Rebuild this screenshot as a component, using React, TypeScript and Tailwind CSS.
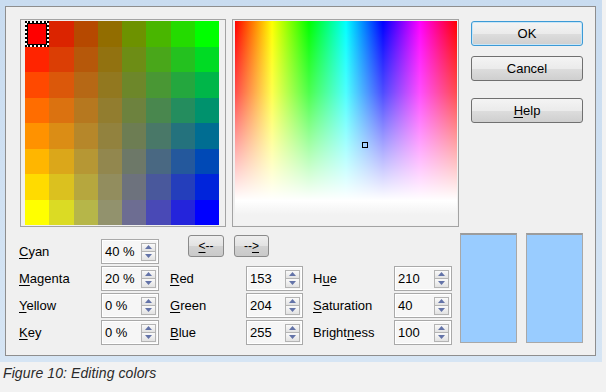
import React from "react";

const TL = [255, 0, 0];
const TR = [0, 255, 0];
const BL = [255, 255, 0];
const BR = [0, 0, 255];

function mix(r: number, c: number) {
  const u = c / 7;
  const v = r / 7;
  const ch = (i: number) =>
    Math.round(
      TL[i] * (1 - u) * (1 - v) + TR[i] * u * (1 - v) + BL[i] * (1 - u) * v + BR[i] * u * v
    );
  return `rgb(${ch(0)},${ch(1)},${ch(2)})`;
}

function Mn({ children }: { children: React.ReactNode }) {
  return <span className="underline underline-offset-2 decoration-1">{children}</span>;
}

function Label({ w, children }: { w: string; children: React.ReactNode }) {
  return <div className={`${w} shrink-0 leading-none`}>{children}</div>;
}

function Tri({ up }: { up?: boolean }) {
  return (
    <svg width="7" height="4" viewBox="0 0 7 4">
      <path d={up ? "M0 4 L3.5 0 L7 4Z" : "M0 0 L3.5 4 L7 0Z"} fill="#6373a8" />
    </svg>
  );
}

function Spin({ value, w = "w-[58px]" }: { value: string; w?: string }) {
  return (
    <div
      className={`${w} h-[25px] shrink-0 border border-[#a9a9a9] bg-[#f6f6f6] shadow-[inset_0_0_0_1px_#ffffff] flex items-center pl-[3px] pr-[2px]`}
    >
      <span className="flex-1 leading-none">{value}</span>
      <div className="w-[15px] flex flex-col">
        <div className="h-[9px] border border-[#b4b4b4] bg-gradient-to-b from-[#fafafa] to-[#e2e2e2] flex items-center justify-center">
          <Tri up />
        </div>
        <div className="h-[9px] border border-t-0 border-[#b4b4b4] bg-gradient-to-b from-[#fafafa] to-[#e2e2e2] flex items-center justify-center">
          <Tri />
        </div>
      </div>
    </div>
  );
}

function Btn({ children, focus }: { children: React.ReactNode; focus?: boolean }) {
  return (
    <div
      className={`h-[25px] w-[112px] rounded-[3px] border ${
        focus ? "border-[#3c9ad6] shadow-[inset_0_0_0_1px_#c9e6f7]" : "border-[#707070]"
      } bg-[linear-gradient(to_bottom,#f4f4f4_0%,#ebebeb_50%,#dddddd_51%,#cfcfcf_100%)] flex items-center justify-center leading-none`}
    >
      {children}
    </div>
  );
}

function Arrow({ children, w }: { children: React.ReactNode; w: string }) {
  return (
    <div
      className={`${w} h-[22px] -mt-[4px] shrink-0 rounded-[3px] border border-[#8a8a8a] bg-[linear-gradient(to_bottom,#eeeeee_0%,#e2e2e2_50%,#d2d2d2_51%,#c9c9c9_100%)] flex items-center justify-center text-[12px] leading-none`}
    >
      {children}
    </div>
  );
}

export default function App() {
  const cells = [];
  for (let r = 0; r < 8; r++) {
    for (let c = 0; c < 8; c++) {
      const key = `${r}-${c}`;
      if (r === 0 && c === 0) {
        cells.push(
          <div key={key} className="bg-white border-2 border-dotted border-black">
            <div className="w-full h-full border border-black" style={{ background: mix(r, c) }} />
          </div>
        );
      } else {
        cells.push(<div key={key} style={{ background: mix(r, c) }} />);
      }
    }
  }

  return (
    <div className="w-[606px] h-[392px] bg-[#f2f2f2] font-['Liberation_Sans',Arial,sans-serif] text-[13px] text-black">
      <div className="w-[602px] h-[362px] bg-[linear-gradient(to_bottom,#c9dcf0,#d6e5f4)] pl-[5px] pt-[6px]">
        <div className="w-[591px] h-[350px] border border-[#8e8e8e] bg-[#f0f0f0]">
          {/* top: palette, gradient, buttons */}
          <div className="flex mt-[12px] ml-[14px]">
            <div className="w-[206px] h-[208px] border border-[#a3a3a3] pl-[4px] pt-[1px] shrink-0">
              <div className="w-[194px] h-[204px] grid grid-cols-8 grid-rows-8">{cells}</div>
            </div>

            <div className="ml-[6px] w-[227px] h-[208px] border border-[#a3a3a3] pl-[2px] pt-[1px] shrink-0">
              <div className="relative w-[222px] h-[204px] bg-[linear-gradient(to_right,#ff0000,#ffff00,#00ff00,#00ffff,#0000ff,#ff00ff,#ff0000)]">
                <div className="absolute inset-0 bg-[linear-gradient(to_bottom,rgba(255,255,255,0)_0%,rgba(255,255,255,0.3)_35%,rgba(255,255,255,0.7)_65%,#ffffff_88%,#f2f2f2_95%)]" />
                <div className="absolute left-[127px] top-[121px] w-[6px] h-[6px] border border-black" />
              </div>
            </div>

            <div className="ml-[12px] mt-[2px] flex flex-col">
              <Btn focus>OK</Btn>
              <div className="mt-[10px]">
                <Btn>Cancel</Btn>
              </div>
              <div className="mt-[17px]">
                <Btn>
                  <span>
                    <Mn>H</Mn>elp
                  </span>
                </Btn>
              </div>
            </div>
          </div>

          {/* bottom: fields and swatches */}
          <div className="flex mt-[6px] ml-[13px]">
            <div className="w-[433px] pt-[6px] flex flex-col gap-[2px]">
              <div className="flex items-center h-[25px]">
                <Label w="w-[82px]">
                  <Mn>C</Mn>yan
                </Label>
                <Spin value="40 %" />
                <div className="self-start flex ml-[29px]">
                  <Arrow w="w-[36px]">
                    <span>
                      <Mn>&lt;</Mn>--
                    </span>
                  </Arrow>
                  <div className="ml-[10px]">
                    <Arrow w="w-[35px]">
                      <span>
                        --<Mn>&gt;</Mn>
                      </span>
                    </Arrow>
                  </div>
                </div>
              </div>

              <div className="flex items-center h-[25px]">
                <Label w="w-[82px]">
                  <Mn>M</Mn>agenta
                </Label>
                <Spin value="20 %" />
                <div className="ml-[11px]" />
                <Label w="w-[76px]">
                  <Mn>R</Mn>ed
                </Label>
                <Spin value="153" w="w-[57px]" />
                <div className="ml-[10px]" />
                <Label w="w-[81px]">
                  H<Mn>u</Mn>e
                </Label>
                <Spin value="210" />
              </div>

              <div className="flex items-center h-[25px]">
                <Label w="w-[82px]">
                  <Mn>Y</Mn>ellow
                </Label>
                <Spin value="0 %" />
                <div className="ml-[11px]" />
                <Label w="w-[76px]">
                  <Mn>G</Mn>reen
                </Label>
                <Spin value="204" w="w-[57px]" />
                <div className="ml-[10px]" />
                <Label w="w-[81px]">
                  <Mn>S</Mn>aturation
                </Label>
                <Spin value="40" />
              </div>

              <div className="flex items-center h-[25px]">
                <Label w="w-[82px]">
                  <Mn>K</Mn>ey
                </Label>
                <Spin value="0 %" />
                <div className="ml-[11px]" />
                <Label w="w-[76px]">
                  <Mn>B</Mn>lue
                </Label>
                <Spin value="255" w="w-[57px]" />
                <div className="ml-[10px]" />
                <Label w="w-[81px]">
                  Bright<Mn>n</Mn>ess
                </Label>
                <Spin value="100" />
              </div>
            </div>

            <div className="ml-[8px] w-[57px] h-[110px] border border-[#a8a8a8] border-t-2 border-t-[#9c9c9c] bg-[#99ccff] shrink-0" />
            <div className="ml-[9px] w-[57px] h-[110px] border border-[#a8a8a8] border-t-2 border-t-[#9c9c9c] bg-[#99ccff] shrink-0" />
          </div>
        </div>
      </div>

      <div className="pl-[3px] mt-[3px] italic text-[14px] leading-[16px] text-[#2a2a2a] tracking-[0.1px]">
        Figure 10: Editing colors
      </div>
    </div>
  );
}
